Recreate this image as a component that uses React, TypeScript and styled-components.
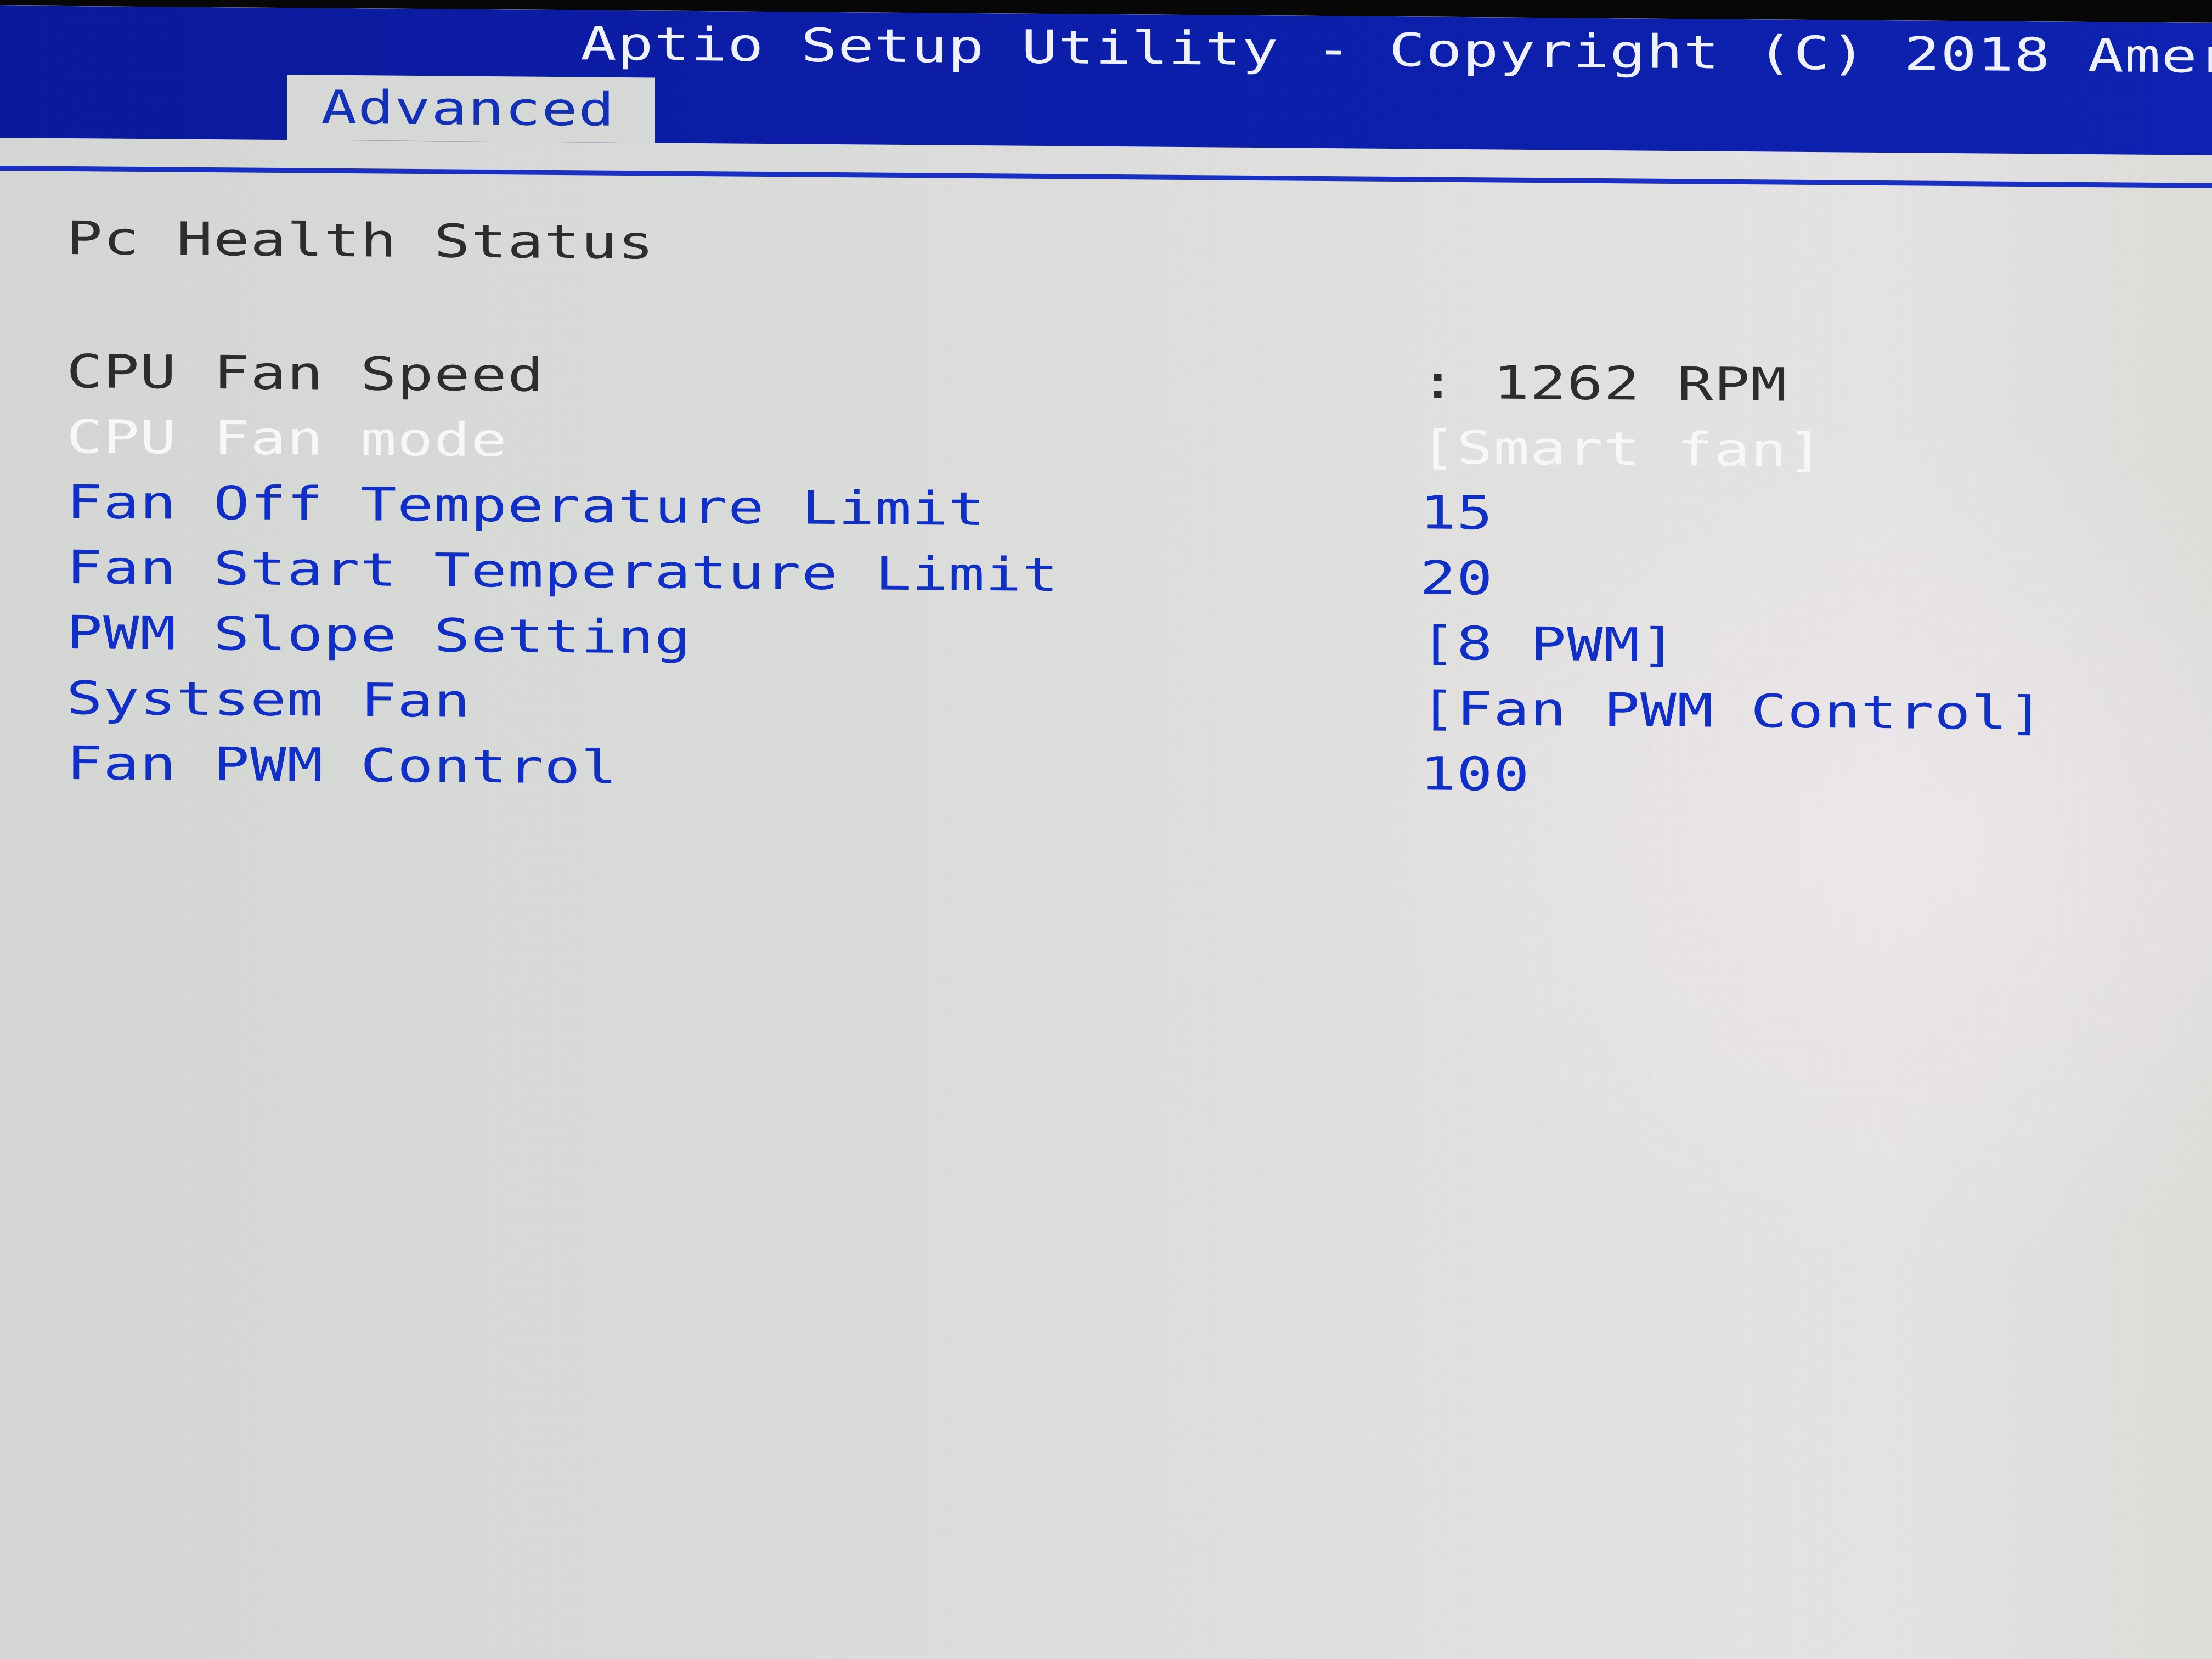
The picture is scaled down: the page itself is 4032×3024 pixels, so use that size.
import React from "react";
import styled, { createGlobalStyle } from "styled-components";

const Global = createGlobalStyle`
  html, body {
    margin: 0;
    padding: 0;
    width: 4032px;
    height: 3024px;
    overflow: hidden;
    background: #070707;
  }
  #root {
    width: 4032px;
    height: 3024px;
  }
`;

const Screen = styled.div`
  margin-top: 10px;
  width: 4032px;
  height: 3100px;
  display: flex;
  flex-direction: column;
  transform: skewY(0.45deg);
  transform-origin: 0 0;
  overflow: hidden;
  font-family: "DejaVu Sans Mono", "Liberation Mono", monospace;
  font-size: 84px;
  letter-spacing: 0.97px;
  white-space: pre;
  background:
    radial-gradient(ellipse 1400px 1100px at 3500px 1500px, rgba(240, 232, 236, 0.7), rgba(240, 232, 236, 0) 70%),
    linear-gradient(90deg, #d3d6d3 0%, #d9dbd8 35%, #dfdfdd 60%, #e4e2e3 85%, #dcdcd8 100%);
`;

/* the BIOS bitmap font is wide and boxy: stretch the glyphs horizontally */
const Glyphs = styled.span`
  display: inline-block;
  transform: scaleX(1.3);
  transform-origin: 0 50%;
`;

const Header = styled.header`
  height: 241px;
  display: flex;
  flex-direction: column;
  background: linear-gradient(90deg, #0a1a9c 0%, #0c1ea8 40%, #0d22b0 100%);
`;

const Title = styled.div`
  height: 122px;
  line-height: 122px;
  padding-left: 1058px;
  color: #eef1ff;
`;

const TabRow = styled.nav`
  height: 119px;
  display: flex;
  padding-left: 523px;
`;

const Tab = styled.div`
  width: 671px;
  box-sizing: border-box;
  padding-left: 62px;
  line-height: 119px;
  background: #d6d8d5;
  color: #1230b8;
`;

const Band = styled.div`
  height: 51px;
`;

const Rule = styled.div`
  height: 9px;
  background: #1a30c2;
`;

const Content = styled.main`
  padding: 62.6px 0 0 121px;
  display: flex;
  flex-direction: column;
`;

const Heading = styled.div`
  line-height: 119px;
  color: #2c2d2d;
`;

const List = styled.div`
  margin-top: 124px;
  display: grid;
  grid-template-columns: 2467px auto;
  grid-auto-rows: 119px;
  line-height: 119px;
`;

type Tone = "dark" | "light" | "blue";

const toneColor: Record<Tone, string> = {
  dark: "#2c2d2d",
  light: "#f7f7f7",
  blue: "#0f2fc6",
};

const Cell = styled.div<{ $tone: Tone }>`
  color: ${(p) => toneColor[p.$tone]};
`;

const rows: { label: string; value: string; tone: Tone }[] = [
  { label: "CPU Fan Speed", value: ": 1262 RPM", tone: "dark" },
  { label: "CPU Fan mode", value: "[Smart fan]", tone: "light" },
  { label: "Fan Off Temperature Limit", value: "15", tone: "blue" },
  { label: "Fan Start Temperature Limit", value: "20", tone: "blue" },
  { label: "PWM Slope Setting", value: "[8 PWM]", tone: "blue" },
  { label: "Systsem Fan", value: "[Fan PWM Control]", tone: "blue" },
  { label: "Fan PWM Control", value: "100", tone: "blue" },
];

export default function App() {
  return (
    <>
      <Global />
      <Screen>
        <Header>
          <Title>
            <Glyphs>Aptio Setup Utility - Copyright (C) 2018 Amer</Glyphs>
          </Title>
          <TabRow>
            <Tab>
              <Glyphs>Advanced</Glyphs>
            </Tab>
          </TabRow>
        </Header>
        <Band />
        <Rule />
        <Content>
          <Heading>
            <Glyphs>Pc Health Status</Glyphs>
          </Heading>
          <List>
            {rows.map((r) => (
              <React.Fragment key={r.label}>
                <Cell $tone={r.tone}>
                  <Glyphs>{r.label}</Glyphs>
                </Cell>
                <Cell $tone={r.tone}>
                  <Glyphs>{r.value}</Glyphs>
                </Cell>
              </React.Fragment>
            ))}
          </List>
        </Content>
      </Screen>
    </>
  );
}
